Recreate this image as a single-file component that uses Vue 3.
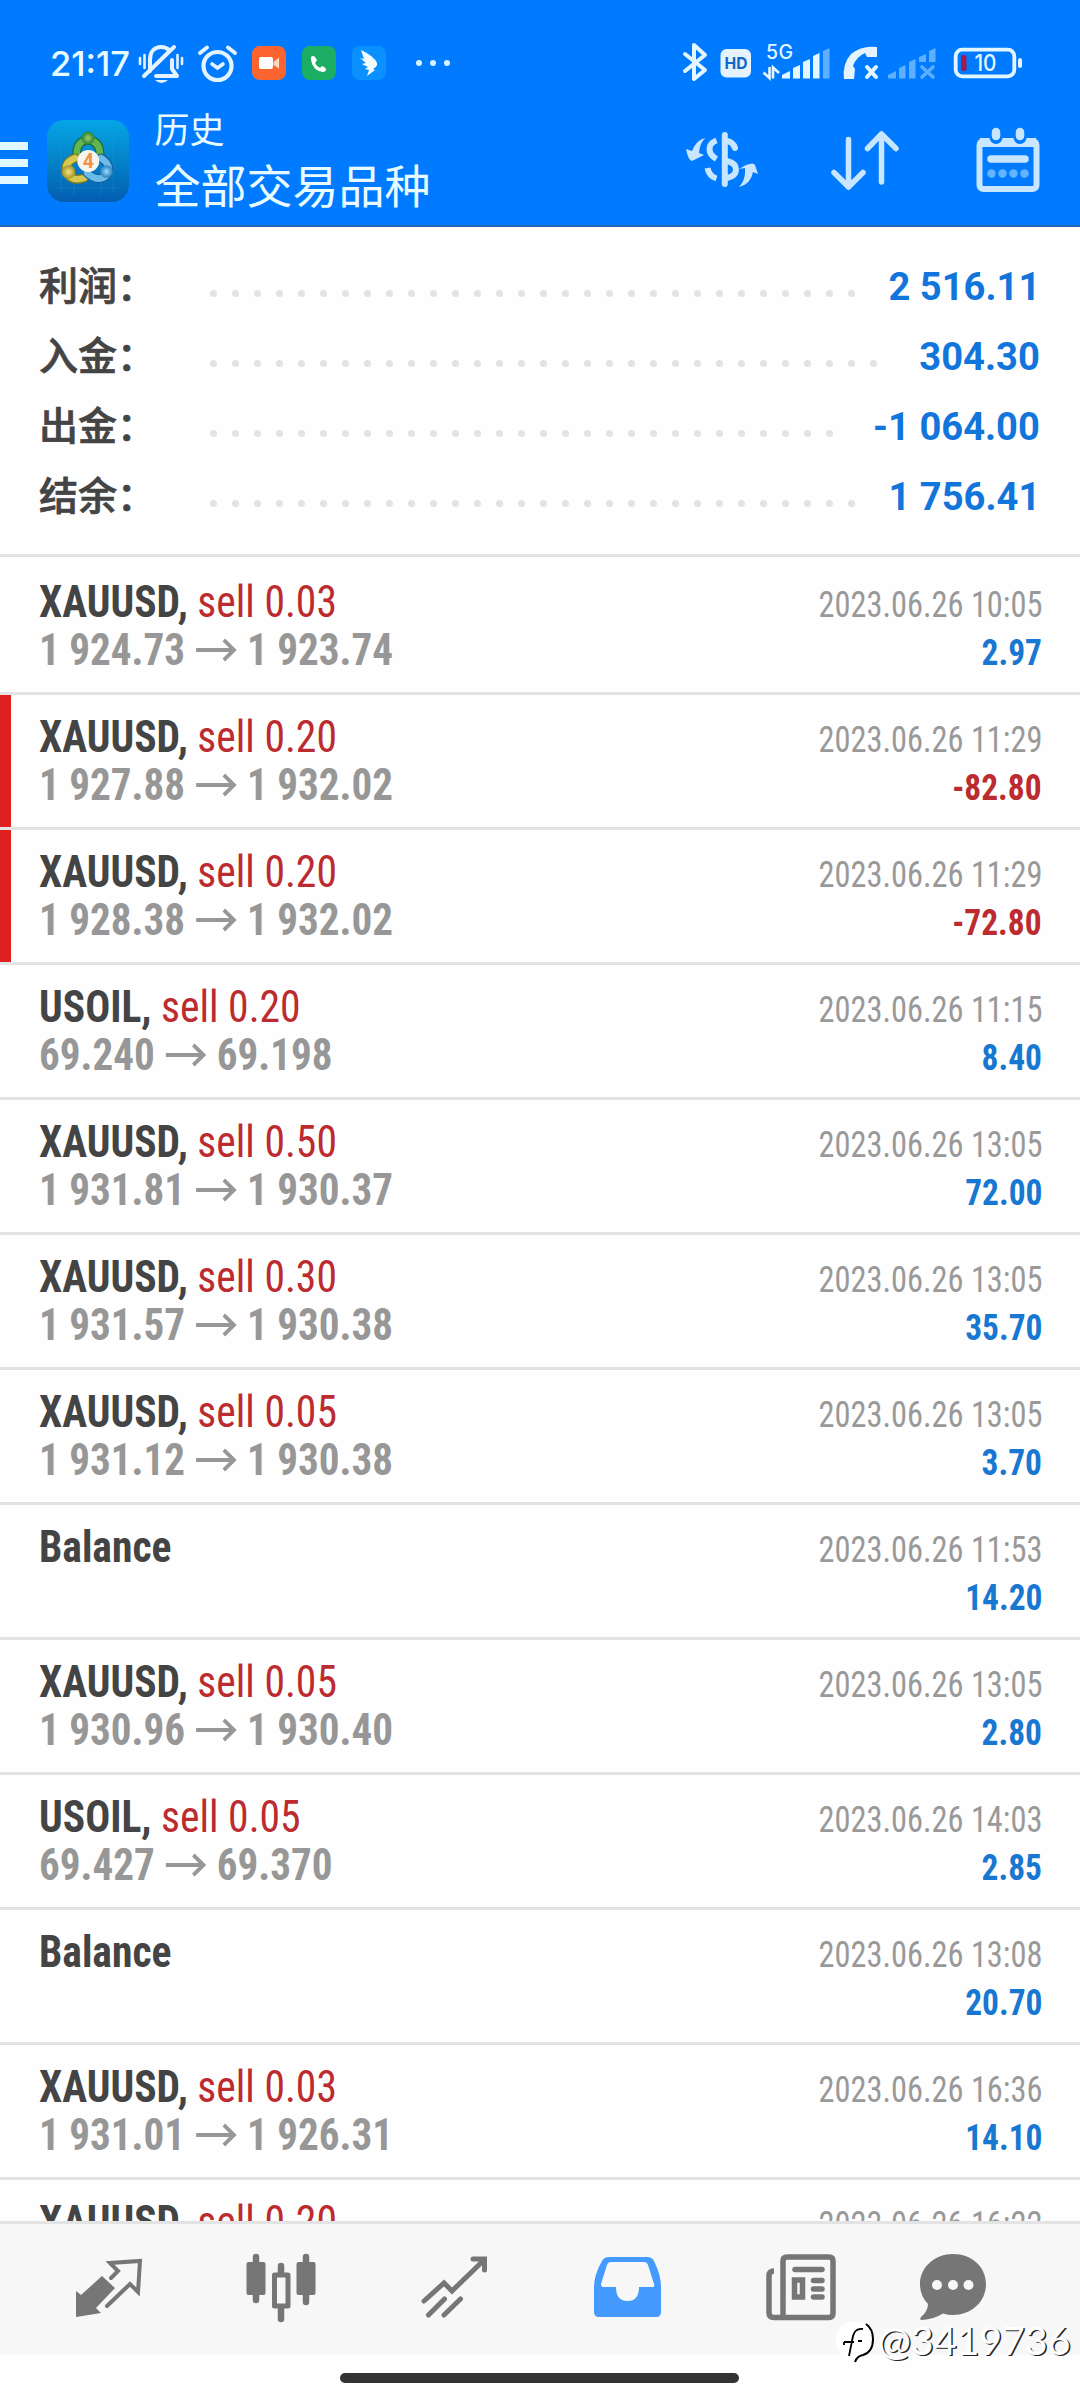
<script setup>
const summary = [
  { label: '利润', value: '2 516.11', dots: 30 },
  { label: '入金', value: '304.30', dots: 31 },
  { label: '出金', value: '-1 064.00', dots: 29 },
  { label: '结余', value: '1 756.41', dots: 30 },
]

const deals = [
  { symbol: 'XAUUSD', volume: '0.03', open: '1 924.73', close: '1 923.74', time: '10:05', profit: '2.97' },
  { symbol: 'XAUUSD', volume: '0.20', open: '1 927.88', close: '1 932.02', time: '11:29', profit: '-82.80', stopped: true },
  { symbol: 'XAUUSD', volume: '0.20', open: '1 928.38', close: '1 932.02', time: '11:29', profit: '-72.80', stopped: true },
  { symbol: 'USOIL', volume: '0.20', open: '69.240', close: '69.198', time: '11:15', profit: '8.40' },
  { symbol: 'XAUUSD', volume: '0.50', open: '1 931.81', close: '1 930.37', time: '13:05', profit: '72.00' },
  { symbol: 'XAUUSD', volume: '0.30', open: '1 931.57', close: '1 930.38', time: '13:05', profit: '35.70' },
  { symbol: 'XAUUSD', volume: '0.05', open: '1 931.12', close: '1 930.38', time: '13:05', profit: '3.70' },
  { symbol: 'Balance', time: '11:53', profit: '14.20' },
  { symbol: 'XAUUSD', volume: '0.05', open: '1 930.96', close: '1 930.40', time: '13:05', profit: '2.80' },
  { symbol: 'USOIL', volume: '0.05', open: '69.427', close: '69.370', time: '14:03', profit: '2.85' },
  { symbol: 'Balance', time: '13:08', profit: '20.70' },
  { symbol: 'XAUUSD', volume: '0.03', open: '1 931.01', close: '1 926.31', time: '16:36', profit: '14.10' },
  { symbol: 'XAUUSD', volume: '0.20', time: '16:22' },
]
</script>

<template>
  <div class="screen">
    <header class="top">
      <div class="status">
        <span class="clock">21:17</span>
        <svg class="status-left" viewBox="136 40 324 48" width="324" height="48" fill="none" stroke="#e4f3ff">
          <g stroke-width="4" stroke-linecap="round" stroke-linejoin="round">
            <path d="M150 71V60C150 51 155 47 161 47C164 47 167 48 169 50" />
            <path d="M156 76H177L172 69V60" />
            <path d="M144 76L174 47" />
            <path stroke-width="2.6" d="M140 58V64M144.500 55V68M177.500 55V68M182 58V64" />
            <path fill="#e4f3ff" stroke="none" d="M155 80H168Q161.500 86 155 80Z" />
          </g>
          <g stroke-width="4" stroke-linecap="round">
            <circle cx="217.500" cy="66" r="14" stroke-width="4.200" />
            <path d="M212 64L217.500 68L223 64" stroke-width="3.600" />
            <path d="M200 53L207 47.500M228 47.500L235 53" />
          </g>
          <rect x="252" y="46" width="34" height="34" rx="8" fill="#fd6530" stroke="none" />
          <rect x="259" y="57" width="14" height="12" rx="2" fill="#fff" stroke="none" />
          <path d="M273.500 62L279 57.500V68.500L273.500 65Z" fill="#ffd5c4" stroke="none" />
          <rect x="302" y="46" width="34" height="34" rx="8" fill="#1bae62" stroke="none" />
          <path d="M311 57Q313 55 315 57L317 60Q316 62 315 63Q317 67 320 68L322 66Q325 67 326 69Q326 72 323 72Q313 71 311 60Z" fill="#fff" stroke="none" />
          <rect x="352" y="46" width="34" height="34" rx="8" fill="#0a91ff" stroke="none" />
          <path d="M361 50Q374 56 377 63Q378 66 373 69L375 70L367 76L369 70L365 69L368 67L362 64L366 63L360 58L364 59Z" fill="#f1fcff" stroke="none" />
          <g fill="#d6f2ff" stroke="none">
            <circle cx="419" cy="63" r="3" /><circle cx="433" cy="63" r="3" /><circle cx="447" cy="63" r="3" />
          </g>
        </svg>
        <svg class="status-right" viewBox="680 40 346 48" width="346" height="48" fill="none" stroke="#e4f6ff">
          <path d="M685 54L705 70L694 79V45L705 55L685 71" stroke-width="4" stroke-linecap="round" stroke-linejoin="round" />
          <rect x="720.500" y="49" width="30.500" height="28.500" rx="6" fill="#e4f3ff" stroke="none" />
          <text x="736" y="69" text-anchor="middle" font-size="16.500" font-weight="700" font-family="Inter, sans-serif" fill="#1268c9" stroke="none" textLength="23" lengthAdjust="spacingAndGlyphs">HD</text>
          <text x="766" y="59" font-size="19.500" font-weight="500" font-family="Inter, sans-serif" fill="#e4f6ff" stroke="none" textLength="27">5G</text>
          <path d="M769.500 67V78L763.500 72.500M773 78.500V67.500L779 73" stroke-width="2.600" />
          <g fill="#e4f6ff" stroke="none">
            <path d="M782 78.500V75L790 71V78.500Z" />
            <path d="M793 78.500V68L800 65V78.500Z" />
            <path d="M803 78.500V62L810 59V78.500Z" />
            <path d="M813 78.500V56L819.500 53V78.500Z" />
          </g>
          <path d="M823 78.500V51L829.500 48V78.500Z" fill="#5eafff" stroke="none" />
          <path d="M844 79Q842 64 851 54Q862 45 877 47V57H867L865 53Q856 57 853 66L855 69L854 79Z" fill="#e4f3ff" stroke="none" />
          <path d="M867 67L876 77M876 67L867 77" stroke-width="4" stroke-linecap="round" />
          <g fill="#5eafff" stroke="none">
            <path d="M888 78.500V75L896 71V78.500Z" />
            <path d="M899 78.500V68L905.500 65V78.500Z" />
            <path d="M909 78.500V62L915.500 59V78.500Z" />
            <path d="M919 62V57L926 54V62ZM929 62V51L935.500 48V62Z" />
          </g>
          <path d="M922 67L933 77M933 67L922 77" stroke="#5eafff" stroke-width="3.600" stroke-linecap="round" />
          <rect x="955.700" y="49.700" width="58.600" height="26.600" rx="6.500" stroke-width="3.800" />
          <rect x="961" y="55" width="5.500" height="16" rx="2" fill="#a5194d" stroke="none" />
          <text x="985.500" y="71" text-anchor="middle" font-size="22.500" font-weight="500" font-family="Inter, sans-serif" fill="#e4f6ff" stroke="none" textLength="22" lengthAdjust="spacingAndGlyphs">10</text>
          <rect x="1018" y="58" width="4" height="10" rx="2" fill="#e4f6ff" stroke="none" />
        </svg>
      </div>

      <div class="bar">
        <div class="burger"><i></i><i></i><i></i></div>
        <svg class="logo" viewBox="0 0 82 82" width="82" height="82">
          <defs>
            <linearGradient id="tile" x1="0" y1="0" x2="0" y2="1">
              <stop offset="0" stop-color="#04a6e6" /><stop offset=".5" stop-color="#0482c8" /><stop offset="1" stop-color="#045cb0" />
            </linearGradient>
            <radialGradient id="green"><stop offset="0" stop-color="#9bd36a" /><stop offset="1" stop-color="#2b7d35" /></radialGradient>
            <radialGradient id="gold"><stop offset="0" stop-color="#f5e47c" /><stop offset="1" stop-color="#a3942a" /></radialGradient>
            <radialGradient id="sky"><stop offset="0" stop-color="#9bdcfb" /><stop offset="1" stop-color="#2a7fbd" /></radialGradient>
          </defs>
          <rect width="82" height="82" rx="17" fill="url(#tile)" />
          <path d="M14 10V72M66 10V72M8 14H74M8 68H74M54 20V76M27 54V76" stroke="#35a5dd" stroke-opacity=".25" fill="none" />
          <g fill="none" stroke-linecap="round" stroke-linejoin="round">
            <path d="M30 38Q28 21 41 20Q54 21 53 38" stroke="#206b34" stroke-width="9" />
            <path d="M30 38Q28 21 41 20Q54 21 53 38" stroke="#62b54f" stroke-width="6.500" />
            <path d="M28 38Q16 43 20 53Q25 62 37 58" stroke="#7f7d20" stroke-width="9" />
            <path d="M28 38Q16 43 20 53Q25 62 37 58" stroke="#d6c850" stroke-width="6.500" />
            <path d="M54 38Q65 45 60 55Q51 63 40 53" stroke="#175f97" stroke-width="9" />
            <path d="M54 38Q65 45 60 55Q51 63 40 53" stroke="#6bbcea" stroke-width="6.500" />
          </g>
          <circle cx="41" cy="18" r="6.500" fill="url(#green)" />
          <circle cx="21.500" cy="52" r="6.800" fill="url(#gold)" />
          <circle cx="59.500" cy="51.500" r="6.300" fill="url(#sky)" />
          <circle cx="41.300" cy="41" r="11" fill="#f7f4ee" />
          <text x="41.300" y="48" text-anchor="middle" font-family="Roboto, sans-serif" font-weight="700" font-size="19.500" fill="#ee9446">4</text>
        </svg>
        <div class="titles">
          <span class="small">历史</span>
          <span class="large">全部交易品种</span>
        </div>
        <svg class="actions" viewBox="680 120 400 90" width="400" height="90" fill="none" stroke="#c8e6ff" stroke-linecap="round" stroke-linejoin="round">
          <g stroke-width="6">
            <path stroke-linecap="butt" d="M716.500 140.500Q709.500 143 709.500 149Q709.500 155 716.500 159M707.500 168Q709 176 716.500 178.500" />
            <path d="M724.800 135V184" />
            <path d="M727 141Q733 142 735 148M727 161Q736 163 736 169.500Q736 176 727 178" />
            <path fill="#c8e6ff" stroke="none" d="M705.500 138Q700 142 699 153L704 155L692 161Q688 160 686 149L692 151Q696 140 705.500 138ZM739 187Q746 180 745 168L739 169L746 165Q754 162 755 165L758 174L753 172Q751 184 739 187Z" />
          </g>
          <path stroke-width="5.500" d="M848.500 139.500V187M834 172.500L848.500 187L863 172.500M881.500 182V134M867.500 148.500L881.500 134L896 148.500" />
          <g>
            <rect x="979.500" y="141" width="57" height="48" rx="4" stroke-width="6" />
            <path stroke-width="9" stroke-linecap="butt" d="M980 142.500H1036" />
            <path stroke="#007bff" stroke-width="13" d="M996 134V137.500M1020 134V137.500" />
            <path stroke-width="8.500" d="M996 132V136M1020 132V136" />
            <path stroke-width="7.500" d="M991 159H1025" />
            <g fill="#65b4ff" stroke="none">
              <circle cx="991.500" cy="173.500" r="4.200" /><circle cx="1002.500" cy="173.500" r="4.200" /><circle cx="1013.500" cy="173.500" r="4.200" /><circle cx="1024.500" cy="173.500" r="4.200" />
            </g>
          </g>
        </svg>
      </div>
    </header>

    <section class="summary">
      <div v-for="row in summary" :key="row.label" class="total">
        <span class="label">{{ row.label }}：</span>
        <span class="leader"><i v-for="n in row.dots" :key="n"></i></span>
        <span class="amount">{{ row.value }}</span>
      </div>
    </section>

    <main class="deals">
      <article v-for="(deal, i) in deals" :key="i" class="deal" :class="{ stopped: deal.stopped }">
        <div class="info">
          <div class="line name">
            <b>{{ deal.symbol }}<template v-if="deal.volume">,</template></b>
            <span v-if="deal.volume" class="side">&nbsp;sell {{ deal.volume }}</span>
          </div>
          <div v-if="deal.open" class="line prices">
            <b>{{ deal.open }}</b>
            <svg viewBox="0 0 44 24" width="44" height="24"><path d="M0 12H40M30 2L41 12L30 22" fill="none" stroke="#979797" stroke-width="4" /></svg>
            <b>{{ deal.close }}</b>
          </div>
        </div>
        <div class="result">
          <span class="line time">2023.06.26 {{ deal.time }}</span>
          <b v-if="deal.profit" class="line profit" :class="{ loss: deal.profit.startsWith('-') }">{{ deal.profit }}</b>
        </div>
      </article>
    </main>

    <nav class="tabs">
      <svg viewBox="22 2224 173 131" fill="none" stroke="#767676">
        <path d="M76 2317V2291L81 2295L102 2276L115 2288L96 2308L101 2313Z" fill="#767676" stroke="none" />
        <path d="M111 2278L118 2271L110 2263L140 2261L138 2292L130 2284L107 2306" stroke-width="4" stroke-linecap="round" />
      </svg>
      <svg viewBox="195 2224 173 131" fill="#767676" stroke="#767676" stroke-linecap="round">
        <path d="M256 2257V2300M306 2257V2302M281 2266V2274M281 2308V2319" stroke-width="6.500" />
        <rect x="246.500" y="2262" width="19" height="33" rx="2" stroke="none" />
        <rect x="296.500" y="2262" width="19" height="33" rx="2" stroke="none" />
        <rect x="274.500" y="2275" width="13.500" height="31" fill="#f7f7f7" stroke-width="5" stroke-linejoin="round" />
      </svg>
      <svg viewBox="368 2224 173 131" fill="none" stroke="#767676" stroke-width="5" stroke-linecap="round">
        <path d="M424 2301L444 2283L452 2291L484 2260M473 2259H484.500V2270M428.500 2315L444.500 2299M444 2315L460.500 2299" />
      </svg>
      <svg viewBox="541 2224 173 131">
        <path fill="#459aff" fill-rule="evenodd" d="M609 2257H647Q652 2257 654 2261Q661 2275 661 2287V2312Q661 2317 656 2317H599Q594 2317 594 2312V2287Q594 2275 602 2261Q604 2257 609 2257ZM611 2262Q608 2262 607 2265L601 2284Q601 2287 603 2287H616Q616 2301 627.500 2301Q639 2301 639 2287H653Q655 2287 654 2284L648 2265Q647 2262 644 2262Z" />
      </svg>
      <svg viewBox="714 2224 173 131" fill="none" stroke="#767676" stroke-width="5.500" stroke-linecap="round">
        <path d="M783 2317.500V2261Q783 2257 787 2257H829Q833 2257 833 2261V2313Q833 2317.500 829 2317.500H774Q769 2317.500 769 2313V2276Q769 2271 774 2271" stroke-linecap="butt" />
        <path d="M795 2269.500H822M813.500 2280.500H822M813.500 2289H822M813.500 2297H822" />
        <rect x="794.500" y="2280" width="8" height="17" />
      </svg>
      <svg viewBox="887 2224 173 131">
        <path d="M953 2254C972 2254 986 2267 986 2284C986 2302 971 2315 953 2315Q948 2315 943 2313.500Q934 2319 922 2320Q919 2320 921 2317Q928 2311 928 2304Q920 2296 920 2284C920 2267 935 2254 953 2254Z" fill="#767676" />
        <g fill="#f7f7f7"><circle cx="937" cy="2285" r="5" /><circle cx="953" cy="2285" r="5" /><circle cx="968.500" cy="2285" r="5" /></g>
      </svg>
    </nav>
    <footer class="gesture"><i></i></footer>

    <div class="watermark">
      <svg viewBox="0 0 38 48" width="38" height="48">
        <rect x="0" y="1" width="37" height="36" rx="16" fill="#fff" />
        <path d="M30 3Q37 8 37 18Q37 31 27 34Q21 35 19 41" fill="none" stroke="#000" stroke-width="2" />
        <path d="M27 8Q19 7 17 15L13 35M8 21H18M8 21V24M22 20H26" fill="none" stroke="#000" stroke-width="1.800" />
      </svg>
      <span>@3419736</span>
    </div>
  </div>
</template>

<style>
body { margin: 0; background: #fff; }
</style>

<style scoped>
.screen { position: relative; display: flex; flex-direction: column; width: 1080px; height: 2400px; overflow: hidden; background: #fefefe; font-family: Roboto, "Noto Sans CJK SC", sans-serif; }
.top { height: 227px; flex: none; box-sizing: border-box; background: #007bff; border-bottom: 2px solid #2267b4; color: #e8fbff; }
.status { display: flex; align-items: flex-start; padding: 40px 0 0 50px; height: 48px; }
.clock { width: 86px; font: 500 34.500px/47px Inter, sans-serif; white-space: nowrap; }
.status-right { margin-left: 220px; }
.bar { display: flex; height: 137px; }
.burger { display: flex; flex-direction: column; gap: 9.500px; width: 28px; padding-top: 54px; }
.burger i { height: 7.500px; background: #e0f8ff; }
.logo { margin: 32px 0 0 19px; }
.titles { display: flex; flex-direction: column; width: 300px; margin-left: 25.500px; font-family: "Noto Sans CJK SC", sans-serif; font-weight: 400; }
.small { font-size: 35px; line-height: 50px; margin-top: 15px; }
.large { font-size: 46px; line-height: 60px; }
.actions { margin: 32px 0 0 225.500px; }
.summary { flex: none; height: 303px; padding: 24px 40px 0 39px; border-bottom: 3px solid #e3e3e3; }
.total { display: flex; height: 70px; align-items: center; }
.label { width: 170px; margin-top: -7px; font: 500 39px/70px "Noto Sans CJK SC", sans-serif; color: #444; -webkit-text-stroke: .7px #444; white-space: nowrap; }
.leader { display: flex; gap: 15px; padding-top: 14px; margin-left: .5px; }
.leader i { width: 7px; height: 7px; border-radius: 50%; background: #e3e3e3; }
.amount { margin-left: auto; font-size: 39.500px; font-weight: 700; color: #1275dc; white-space: nowrap; transform: scaleX(.965); transform-origin: right; }
.deals { flex: 1; min-height: 0; overflow: hidden; padding-top: 3px; }
.deal { display: flex; justify-content: space-between; height: 132px; padding: 0 38px 0 39px; border-bottom: 3px solid #e3e3e3; }
.deal.stopped { background: linear-gradient(#e02020, #e02020) 0 0 / 11px 132px no-repeat; background-clip: padding-box; }
.line { display: flex; white-space: nowrap; font-stretch: 75%; font-family: "Roboto Condensed", Roboto, sans-serif; transform-origin: left; }
.info { padding-top: 17px; }
.name, .prices { height: 48px; line-height: 48px; font-size: 44.500px; color: #444; align-items: center; }
.name { transform: scaleX(.934); }
.side { color: #bb2b2f; }
.prices { color: #979797; transform: scaleX(.924); }
.prices svg { margin: 0 11px 0 12px; }
.result { display: flex; flex-direction: column; align-items: flex-end; padding-top: 20px; }
.time, .profit { height: 48px; line-height: 48px; font-size: 36.500px; transform-origin: right; }
.time { color: #999; transform: scaleX(.887); }
.profit { color: #1877d0; transform: scaleX(.915); }
.profit.loss { color: #bb2b2f; }
.info, .result { position: relative; top: .5px; }
.tabs { display: flex; flex: none; height: 131px; padding-left: 22px; border-top: 3px solid #e3e3e3; background: #f7f7f7; }
.tabs svg { width: 173px; height: 131px; }
.gesture { flex: none; display: flex; height: 45px; padding-left: 340px; }
.gesture i { width: 399px; height: 10px; margin-top: 18px; border-radius: 5px; background: #333; }
.watermark { position: absolute; left: 836px; top: 2321px; display: flex; align-items: flex-start; color: #fff; }
.watermark span { margin-left: 4px; font: 400 39.300px/38px Lato, sans-serif; text-shadow: 1.500px 1px 0 #222; white-space: nowrap; }
</style>
